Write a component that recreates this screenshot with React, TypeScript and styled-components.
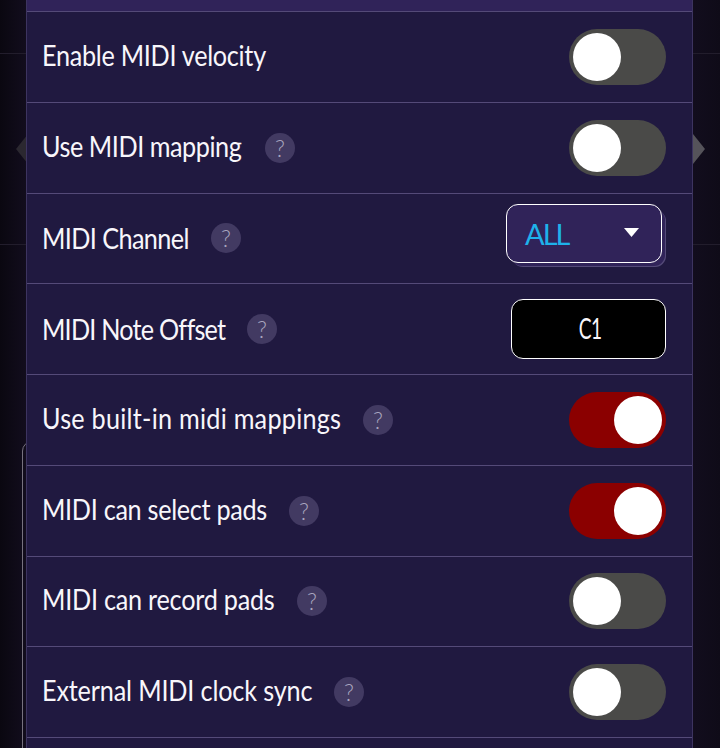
import React from "react";
import styled, { createGlobalStyle } from "styled-components";

const Global = createGlobalStyle`
  html, body { margin: 0; padding: 0; background: #0e0a17; }
  #root { width: 720px; height: 748px; }
`;

const Screen = styled.div`
  position: relative;
  box-sizing: border-box;
  width: 720px;
  height: 748px;
  padding-left: 26px;
  overflow: hidden;
  background: linear-gradient(90deg, #0a0710 0, #120d1d 26px, #120d1d 694px, #0f0b18 720px);
  font-family: "Lato", sans-serif;
`;

const BackLine = styled.div<{ $top: number }>`
  position: absolute;
  left: 0;
  right: 0;
  top: ${(p) => p.$top}px;
  height: 1px;
  background: #221d2c;
`;

const NavArrow = styled.div<{ $side: "left" | "right" }>`
  position: absolute;
  top: 134px;
  ${(p) => (p.$side === "left" ? "left: 16px;" : "left: 693px;")}
  width: 12px;
  height: 30px;
  background: ${(p) => (p.$side === "left" ? "#2b2830" : "#55535a")};
  clip-path: ${(p) =>
    p.$side === "left"
      ? "polygon(100% 0, 0 50%, 100% 100%)"
      : "polygon(0 0, 100% 50%, 0 100%)"};
`;

const BackCard = styled.div`
  position: absolute;
  left: 22px;
  top: 441px;
  width: 40px;
  height: 400px;
  border: 1px solid #77727f;
  border-radius: 10px;
`;

const Panel = styled.div`
  position: relative;
  box-sizing: border-box;
  width: 667px;
  background: #201940;
  border-left: 1px solid #3d3460;
  border-right: 1px solid #3d3460;
`;

const PanelHead = styled.div`
  height: 11px;
  background: #302359;
  border-bottom: 1px solid #544a78;
`;

const Row = styled.div`
  box-sizing: border-box;
  height: 90.75px;
  padding: 0 26px 0 15px;
  display: flex;
  align-items: center;
  justify-content: space-between;
  border-bottom: 1px solid #544a78;
`;

const LabelGroup = styled.div`
  display: flex;
  align-items: center;
  gap: 23px;
`;

const Label = styled.span<{ $width: number; $spacing: number; $low?: boolean }>`
  flex: none;
  width: ${(p) => p.$width}px;
  padding-bottom: ${(p) => (p.$low ? 0 : 4)}px;
  color: #f8f6fb;
  font-size: 28px;
  letter-spacing: ${(p) => p.$spacing}px;
  white-space: nowrap;
  transform: scaleX(0.9);
  transform-origin: left center;
`;

const Help = styled.span`
  width: 30px;
  height: 30px;
  flex: none;
  border-radius: 50%;
  background: #423a62;
  color: #a9a5bf;
  display: flex;
  align-items: center;
  justify-content: center;
  font-size: 23px;
  font-weight: 300;
`;

const Track = styled.div<{ $on: boolean }>`
  box-sizing: border-box;
  width: 97px;
  height: 56px;
  padding: 4px;
  border-radius: 28px;
  background: ${(p) => (p.$on ? "#8b0000" : "#4a4a48")};
  display: flex;
  justify-content: ${(p) => (p.$on ? "flex-end" : "flex-start")};
`;

const Knob = styled.div`
  width: 48px;
  height: 48px;
  border-radius: 50%;
  background: #fff;
`;

const Select = styled.div`
  box-sizing: border-box;
  width: 156px;
  height: 59px;
  margin: 0 4px 10px 0;
  padding: 1px 22px 0 18px;
  display: flex;
  align-items: center;
  justify-content: space-between;
  background: #302359;
  border: 1px solid #fff;
  border-radius: 12px;
  box-shadow: 4px 4px 0 -1px #302359, 5px 5px 0 -1px #544a78;
  color: #1eb2ea;
  font-size: 29px;
  letter-spacing: -2px;
`;

const Caret = styled.svg`
  width: 15px;
  height: 9px;
  margin-bottom: 2px;
  fill: #fff;
`;

const NoteInput = styled.div`
  box-sizing: border-box;
  width: 155px;
  height: 60px;
  padding: 0 0 3px 3px;
  display: flex;
  align-items: center;
  justify-content: center;
  background: #000;
  border: 1px solid #fff;
  border-radius: 12px;
`;

const NoteValue = styled.span`
  color: #f8f6fb;
  font-size: 29px;
  letter-spacing: -1px;
  transform: scaleX(0.66);
`;

const Toggle = ({ on = false }: { on?: boolean }) => (
  <Track $on={on}>
    <Knob />
  </Track>
);

type RowData = {
  label: string;
  width: number;
  spacing: number;
  help?: boolean;
  low?: boolean;
  control: React.ReactNode;
};

const rows: RowData[] = [
  { label: "Enable MIDI velocity", width: 223, spacing: -0.31, control: <Toggle /> },
  { label: "Use MIDI mapping", width: 200, spacing: -0.49, help: true, control: <Toggle /> },
  {
    label: "MIDI Channel",
    width: 146,
    spacing: -0.65,
    help: true,
    low: true,
    control: (
      <Select>
        ALL
        <Caret viewBox="0 0 15 9">
          <path d="M0 0h15L7.5 9z" />
        </Caret>
      </Select>
    ),
  },
  {
    label: "MIDI Note Offset",
    width: 182,
    spacing: -0.86,
    help: true,
    low: true,
    control: (
      <NoteInput>
        <NoteValue>C1</NoteValue>
      </NoteInput>
    ),
  },
  { label: "Use built-in midi mappings", width: 298, spacing: 0.28, help: true, control: <Toggle on /> },
  { label: "MIDI can select pads", width: 224, spacing: -0.33, help: true, control: <Toggle on /> },
  { label: "MIDI can record pads", width: 232, spacing: -0.26, help: true, control: <Toggle /> },
  { label: "External MIDI clock sync", width: 269, spacing: -0.17, help: true, control: <Toggle /> },
];

export default function App() {
  return (
    <Screen>
      <Global />
      <BackLine $top={53} />
      <BackLine $top={244} />
      <NavArrow $side="left" />
      <NavArrow $side="right" />
      <BackCard />
      <Panel>
        <PanelHead />
        {rows.map((r) => (
          <Row key={r.label}>
            <LabelGroup>
              <Label $width={r.width} $spacing={r.spacing} $low={r.low}>
                {r.label}
              </Label>
              {r.help && <Help>?</Help>}
            </LabelGroup>
            {r.control}
          </Row>
        ))}
        <Row />
      </Panel>
    </Screen>
  );
}
